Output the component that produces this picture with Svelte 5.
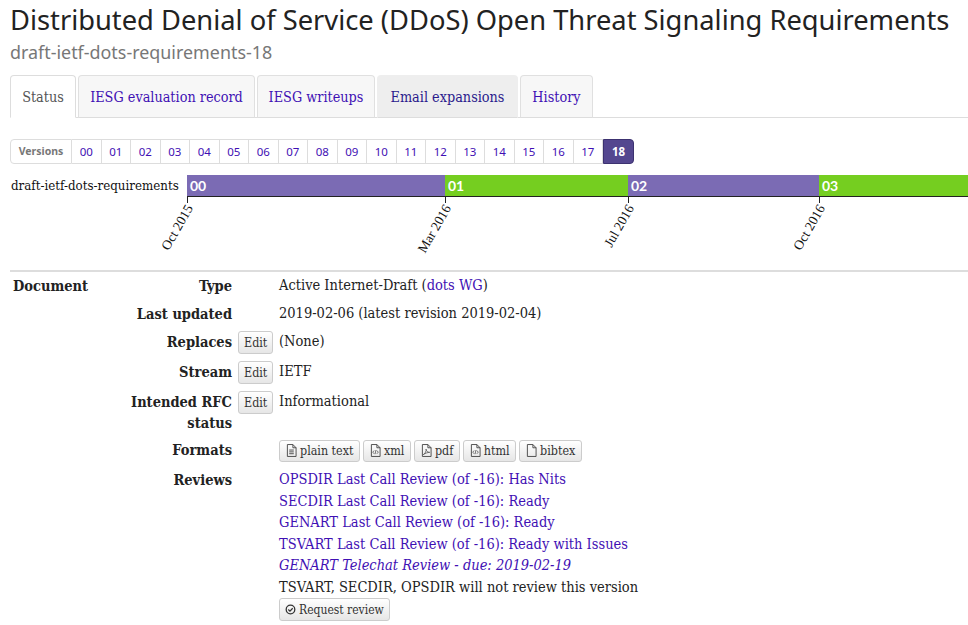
<script>
  const tabs = [
    { label: "Status", width: 66, active: true },
    { label: "IESG evaluation record", width: 177 },
    { label: "IESG writeups", width: 118 },
    { label: "Email expansions", width: 141, hover: true },
    { label: "History", width: 73 },
  ];
  const versions = Array.from({ length: 18 }, (_, i) => String(i).padStart(2, "0"));
  const bars = [
    { rev: "00", width: 258, color: "#7b6bb4" },
    { rev: "01", width: 183, color: "#75ce20" },
    { rev: "02", width: 191, color: "#7b6bb4" },
    { rev: "03", width: 149, color: "#75ce20" },
  ];
  const ticks = [
    { x: 0.5, label: "Oct 2015" },
    { x: 258.5, label: "Mar 2016" },
    { x: 441.5, label: "Jul 2016" },
    { x: 632.5, label: "Oct 2016" },
  ];
  const reviews = [
    "OPSDIR Last Call Review (of -16): Has Nits",
    "SECDIR Last Call Review (of -16): Ready",
    "GENART Last Call Review (of -16): Ready",
    "TSVART Last Call Review (of -16): Ready with Issues",
  ];
  const formats = [
    { label: "plain text", icon: "text" },
    { label: "xml", icon: "code" },
    { label: "pdf", icon: "pdf" },
    { label: "html", icon: "code" },
    { label: "bibtex", icon: "blank" },
  ];
</script>

<div class="page">
  <h1>Distributed Denial of Service (DDoS) Open Threat Signaling Requirements</h1>
  <div class="draft">draft-ietf-dots-requirements-18</div>

  <ul class="tabs">
    {#each tabs as t}
      <li class:active={t.active} class:hover={t.hover} style="width:{t.width}px">{t.label}</li>
    {/each}
  </ul>

  <div class="versions">
    <span class="v-label">Versions</span>
    {#each versions as v}
      <span class="v">{v}</span>
    {/each}
    <span class="v current">18</span>
  </div>

  <div class="timeline">
    <div class="t-name">draft-ietf-dots-requirements</div>
    <div class="t-chart">
      <div class="t-bars">
        {#each bars as b}
          <div class="bar" style="width:{b.width}px;background:{b.color}">{b.rev}</div>
        {/each}
      </div>
      <svg class="t-axis" width="781" height="73">
        {#each ticks as t}
          <line x1={t.x} y1="0" x2={t.x} y2="6" stroke="#222" />
          <text transform="translate({t.x + 6} 11) rotate(-60)" text-anchor="end">{t.label}</text>
        {/each}
      </svg>
    </div>
  </div>

  <div class="meta">
    <div class="sec">Document</div>
    <div class="key">Type</div>
    <div class="edit"></div>
    <div class="val">Active Internet-Draft (<a href="#top">dots WG</a>)</div>

    <div class="sec"></div>
    <div class="key">Last updated</div>
    <div class="edit"></div>
    <div class="val">2019-02-06 (latest revision 2019-02-04)</div>

    <div class="sec"></div>
    <div class="key">Replaces</div>
    <div class="edit"><span class="btn">Edit</span></div>
    <div class="val">(None)</div>

    <div class="sec"></div>
    <div class="key">Stream</div>
    <div class="edit"><span class="btn">Edit</span></div>
    <div class="val">IETF</div>

    <div class="sec"></div>
    <div class="key">Intended RFC status</div>
    <div class="edit"><span class="btn">Edit</span></div>
    <div class="val">Informational</div>

    <div class="sec"></div>
    <div class="key">Formats</div>
    <div class="edit"></div>
    <div class="val fmts">
      {#each formats as f}
        <span class="btn">
          <svg class="ic" viewBox="0 0 12 14" width="11" height="13" fill="none" stroke="#444" stroke-width="1">
            <path d="M1.5 .5h6l3.5 3.5v9.500h-9.500z M7.500 .5v3.500h3.500" />
            {#if f.icon === "text"}
              <path d="M3.500 6.500h5M3.500 8.500h5M3.500 10.500h5" />
            {:else if f.icon === "code"}
              <path d="M4.500 7l-1.500 1.800 1.500 1.800M7.500 7l1.500 1.800-1.500 1.800M6.500 6.500l-1 4.500" stroke-width=".8" />
            {:else if f.icon === "pdf"}
              <path d="M2.500 11.500c2-1 3.500-4 3-6 .5 2.500 2 3.500 4 3.500-2 0-5 1-7 2.500z" stroke-width=".8" />
            {/if}
          </svg>{f.label}</span>
      {/each}
    </div>

    <div class="sec"></div>
    <div class="key">Reviews</div>
    <div class="edit"></div>
    <div class="val reviews">
      {#each reviews as r}
        <div><a href="#top">{r}</a></div>
      {/each}
      <div><a href="#top"><i>GENART Telechat Review - due: 2019-02-19</i></a></div>
      <div>TSVART, SECDIR, OPSDIR will not review this version</div>
      <span class="btn req">
        <svg class="ic" viewBox="0 0 12 12" width="11" height="11" fill="none" stroke="#333">
          <circle cx="6" cy="6" r="4.700" stroke-width="1.400" />
          <path d="M3.600 6l1.800 1.800 3-3.200" stroke-width="1.400" />
        </svg>Request review</span>
    </div>
  </div>
</div>

<style>
  :global(body) {
    margin: 0;
    background: #fff;
    color: #222;
    font-family: "DejaVu Serif Condensed", "Liberation Serif", serif;
    overflow: hidden;
  }
  .page {
    height: 625px;
    overflow: hidden;
    box-sizing: border-box;
    padding: 0 0 0 10px;
    font-size: 14.5px;
    line-height: 21.5px;
  }
  a { color: #3f10b4; text-decoration: none; }

  h1 {
    margin: 0;
    padding-top: 2px;
    font: 400 27.3px/36px "Noto Sans", sans-serif;
    color: #222;
    white-space: nowrap;
  }
  .draft {
    margin-top: 2px;
    font: 400 17.9px/24px "Noto Sans", sans-serif;
    color: #777;
  }

  .tabs {
    display: flex;
    gap: 2px;
    list-style: none;
    margin: 11px 0 0;
    padding: 0;
    border-bottom: 1px solid #ddd;
    height: 42px;
  }
  .tabs li {
    box-sizing: border-box;
    flex: none;
    height: 43px;
    padding-top: 11px;
    font-size: 14.3px;
    text-align: center;
    background: #f7f7f7;
    border: 1px solid #e0e0e0;
    border-bottom: 1px solid #ddd;
    border-radius: 4px 4px 0 0;
    color: #3f10b4;
    white-space: nowrap;
  }
  .tabs li.active {
    background: #fff;
    color: #555;
    border-color: #ddd;
    border-bottom-color: #fff;
  }
  .tabs li.hover {
    background: #eee;
    border-color: #eee;
    border-bottom-color: #ddd;
    color: #2a1a8c;
  }

  .versions {
    display: inline-flex;
    margin-top: 21px;
    height: 25px;
    vertical-align: top;
    font: 400 11.5px/23px "Noto Sans", sans-serif;
  }
  .v-label {
    box-sizing: border-box;
    width: 62px;
    text-align: center;
    font-weight: 700;
    font-size: 10.5px;
    color: #777;
    border: 1px solid #ddd;
    border-radius: 4px 0 0 4px;
  }
  .v {
    box-sizing: border-box;
    width: 29.5px;
    text-align: center;
    color: #3f10b4;
    border: 1px solid #ddd;
    border-left: 0;
  }
  .v.current {
    width: 31px;
    font-weight: 700;
    color: #fff;
    background: #54478f;
    border: 1px solid #3c3270;
    border-radius: 0 4px 4px 0;
  }

  .timeline {
    display: flex;
    margin-top: 11px;
    height: 95px;
    border-bottom: 2px solid #ddd;
  }
  .t-name {
    box-sizing: border-box;
    width: 177px;
    flex: none;
    padding: 1px 0 0 1px;
    font-size: 13.2px;
    line-height: 20px;
    color: #111;
    white-space: nowrap;
  }
  .t-chart { flex: 1; min-width: 0; }
  .t-bars {
    display: flex;
    height: 21px;
    border-bottom: 1px solid #222;
  }
  .bar {
    box-sizing: border-box;
    flex: none;
    padding-left: 3px;
    font: 700 14px/21px Lato, sans-serif;
    color: #fff;
  }
  .t-axis { display: block; overflow: visible; }
  .t-axis text {
    font: 13.5px "Liberation Serif", serif;
    fill: #111;
  }

  .meta {
    display: grid;
    grid-template-columns: 96px 126px 47px 1fr;
  }
  .sec, .key { font-weight: 700; }
  .sec { padding-left: 3px; padding-top: 2.500px; }
  .key { text-align: right; padding: 2.500px 0 4px; line-height: 21px; }
  .edit { padding: 3px 0 4px 6px; }
  .val { padding: 3px 0 3.500px; }

  .btn {
    display: inline-flex;
    align-items: center;
    gap: 3px;
    box-sizing: border-box;
    height: 23px;
    padding: 0 5px;
    font-size: 12.4px;
    line-height: 20px;
    color: #333;
    background: linear-gradient(#fff, #e6e6e6);
    border: 1px solid #ccc;
    border-radius: 3px;
    white-space: nowrap;
  }
  .fmts { display: flex; gap: 3px; padding: 3px 0 4.500px; }
  .fmts .btn { height: 22px; padding: 0 5.500px 0 6px; }
  .req { display: flex; width: fit-content; font-size: 12px; }
  .ic { flex: none; }
</style>
